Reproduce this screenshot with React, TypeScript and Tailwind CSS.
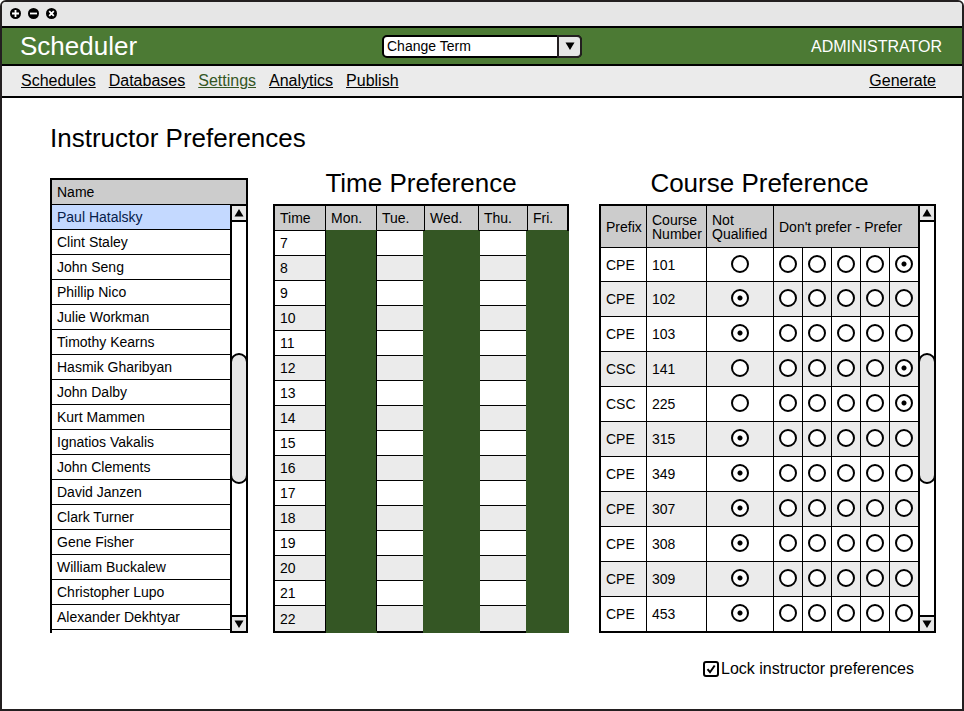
import { useState } from "react";

const instructors = [
  "Paul Hatalsky",
  "Clint Staley",
  "John Seng",
  "Phillip Nico",
  "Julie Workman",
  "Timothy Kearns",
  "Hasmik Gharibyan",
  "John Dalby",
  "Kurt Mammen",
  "Ignatios Vakalis",
  "John Clements",
  "David Janzen",
  "Clark Turner",
  "Gene Fisher",
  "William Buckalew",
  "Christopher Lupo",
  "Alexander Dekhtyar",
];

const hours = [7, 8, 9, 10, 11, 12, 13, 14, 15, 16, 17, 18, 19, 20, 21, 22];

// rating 0 means "not qualified"; 1 to 5 run from "don't prefer" to "prefer"
const courses = [
  { prefix: "CPE", number: 101, rating: 5 },
  { prefix: "CPE", number: 102, rating: 0 },
  { prefix: "CPE", number: 103, rating: 0 },
  { prefix: "CSC", number: 141, rating: 5 },
  { prefix: "CSC", number: 225, rating: 5 },
  { prefix: "CPE", number: 315, rating: 0 },
  { prefix: "CPE", number: 349, rating: 0 },
  { prefix: "CPE", number: 307, rating: 0 },
  { prefix: "CPE", number: 308, rating: 0 },
  { prefix: "CPE", number: 309, rating: 0 },
  { prefix: "CPE", number: 453, rating: 0 },
];

const navLinks = ["Schedules", "Databases", "Settings", "Analytics", "Publish"];

function WindowButton({ label, path }: { label: string; path: string }) {
  return (
    <button type="button" aria-label={label} className="block">
      <svg viewBox="0 0 12 12" className="block size-3">
        <circle cx="6.5" cy="5.5" r="5.5" fill="#000" />
        <path d={path} stroke="#fff" strokeWidth="1.8" fill="none" />
      </svg>
    </button>
  );
}

function Arrow({ up = false }: { up?: boolean }) {
  return (
    <svg viewBox="0 0 10 8" className="block h-2 w-2.5" aria-hidden="true">
      <path d={up ? "M5 0 9.5 7.5H0.5Z" : "M5 8 9.5 0.5H0.5Z"} fill="#000" />
    </svg>
  );
}

function Scrollbar() {
  return (
    <div className="flex w-[18px] shrink-0 flex-col border-2 border-black bg-white">
      <button
        type="button"
        aria-label="Scroll up"
        className="flex h-4 items-center justify-center border-b-2 border-black bg-[#e6e6e6]"
      >
        <Arrow up />
      </button>
      <div className="flex flex-1 flex-col justify-center">
        <div className="-mx-0.5 h-1/3 rounded-full border-2 border-black bg-[#e6e6e6]" />
      </div>
      <button
        type="button"
        aria-label="Scroll down"
        className="flex h-4 items-center justify-center border-t-2 border-black bg-[#e6e6e6]"
      >
        <Arrow />
      </button>
    </div>
  );
}

function InstructorList() {
  const [selected, setSelected] = useState("Paul Hatalsky");
  return (
    <section className="mt-[11px] flex flex-col border-t-2 border-black text-sm">
      <h2 className="h-6 border-x-2 border-black bg-[#cccccc] px-[5px] leading-6">Name</h2>
      <div className="flex flex-1">
        <ul className="flex-1 border-t border-l-2 border-black">
          {instructors.map((name) => (
            <li key={name} className="border-b border-black">
              <button
                type="button"
                onClick={() => setSelected(name)}
                className={
                  name === selected
                    ? "block h-6 w-full bg-[#c4d9ff] px-[5px] text-left leading-6 text-[#06204a]"
                    : "block h-6 w-full px-[5px] text-left leading-6"
                }
              >
                {name}
              </button>
            </li>
          ))}
        </ul>
        <Scrollbar />
      </div>
    </section>
  );
}

function TimePreference() {
  const head = "h-[25px] border-r border-b border-black pl-[5px] text-left font-normal";
  const headBusy = "h-[25px] border-r border-r-black border-b border-b-[#345624] pl-[5px] text-left font-normal";
  const open = "border-r border-b border-black group-last:border-b-0";
  return (
    <section>
      <h2 className="mb-[5px] text-center text-[26px] leading-8">Time Preference</h2>
      <table className="w-full table-fixed border-separate border-spacing-0 border-2 border-black text-sm">
        <colgroup>
          <col className="w-[51px]" />
          <col className="w-[51px]" />
          <col className="w-[48px]" />
          <col className="w-[54px]" />
          <col className="w-[49px]" />
          <col className="w-[39px]" />
        </colgroup>
        <thead className="bg-[#cccccc]">
          <tr>
            <th className={head}>Time</th>
            <th className={headBusy}>Mon.</th>
            <th className={head}>Tue.</th>
            <th className={headBusy}>Wed.</th>
            <th className={head}>Thu.</th>
            <th className="h-[25px] border-b border-[#345624] pl-[5px] text-left font-normal">Fri.</th>
          </tr>
        </thead>
        <tbody>
          {hours.map((hour) => (
            <tr key={hour} className="group even:bg-[#ebebeb]">
              <th
                scope="row"
                className="h-[25px] border-r border-b border-black pl-[5px] text-left font-normal group-last:border-b-0"
              >
                {hour}
              </th>
              <td className="relative border-r border-black bg-[#345624] shadow-[0_2px_#345624]" />
              <td className={open} />
              <td className="relative bg-[#345624] shadow-[-2px_0_#345624,1px_0_#345624,-2px_2px_#345624,1px_2px_#345624]" />
              <td className={open} />
              <td className="relative bg-[#345624] shadow-[-2px_0_#345624,2px_0_#345624,-2px_2px_#345624,2px_2px_#345624]" />
            </tr>
          ))}
        </tbody>
      </table>
    </section>
  );
}

function CoursePreference() {
  const [ratings, setRatings] = useState(courses.map((course) => course.rating));
  const rate = (row: number, value: number) =>
    setRatings(ratings.map((old, index) => (index === row ? value : old)));
  const head = "h-[42px] border-r border-b border-black pl-[5px] text-left leading-[14px] font-normal";
  const text = "h-[35px] border-r border-b border-black pl-[5px] group-first:h-[34px] group-last:h-[34px] group-last:border-b-0";
  return (
    <section className="flex flex-col pl-[5px]">
      <h2 className="mb-[5px] pr-4 text-center text-[26px] leading-8">Course Preference</h2>
      <div className="flex">
        <table className="flex-1 table-fixed border-separate border-spacing-0 border-y-2 border-l-2 border-black text-sm">
          <colgroup>
            <col className="w-[46px]" />
            <col className="w-[60px]" />
            <col className="w-[67px]" />
            <col className="w-[29px]" />
            <col className="w-[29px]" />
            <col className="w-[29px]" />
            <col className="w-[29px]" />
            <col className="w-[28px]" />
          </colgroup>
          <thead className="bg-[#cccccc]">
            <tr>
              <th className={head}>Prefix</th>
              <th className={head}>
                Course
                <br />
                Number
              </th>
              <th className={head}>
                Not
                <br />
                Qualified
              </th>
              <th
                colSpan={5}
                className="border-b border-black pl-[5px] text-left leading-[14px] font-normal"
              >
                Don't prefer - Prefer
              </th>
            </tr>
          </thead>
          <tbody>
            {courses.map((course, row) => (
              <tr key={course.number} className="group even:bg-[#ebebeb]">
                <td className={text}>{course.prefix}</td>
                <td className={text}>{course.number}</td>
                {[0, 1, 2, 3, 4, 5].map((value) => (
                  <td
                    key={value}
                    className="border-r border-b border-black pb-0.5 group-last:border-b-0 last:border-r-0"
                  >
                    <input
                      type="radio"
                      name={`course-${course.number}`}
                      aria-label={
                        value === 0
                          ? `${course.prefix} ${course.number} not qualified`
                          : `${course.prefix} ${course.number} preference ${value}`
                      }
                      checked={ratings[row] === value}
                      onChange={() => rate(row, value)}
                      className="mx-auto block size-[18px] appearance-none rounded-full border-2 border-black bg-white checked:bg-[radial-gradient(circle,#000_2px,#fff_3px)]"
                    />
                  </td>
                ))}
              </tr>
            ))}
          </tbody>
        </table>
        <Scrollbar />
      </div>
    </section>
  );
}

export default function App() {
  const [locked, setLocked] = useState(true);
  return (
    <div className="min-h-screen rounded-t-md border-2 border-[#231f20] bg-white font-['Liberation_Sans',Arial,sans-serif] text-black">
      <div className="flex h-[26px] items-center gap-1.5 rounded-t border-b-2 border-black bg-[#e6e6e6] pl-[7px]">
        <WindowButton label="Maximize" path="M6.5 2V9M3 5.5H10" />
        <WindowButton label="Minimize" path="M3 5.5H10" />
        <WindowButton label="Close" path="M4.2 3.2 8.8 7.8M8.8 3.2 4.2 7.8" />
      </div>

      <header className="grid h-[38px] grid-cols-[1fr_200px_1fr] items-center border-b-2 border-black bg-[#4c7a34] px-[18px] text-white">
        <h1 className="text-[26px] leading-8">Scheduler</h1>
        <div className="relative text-black">
          <select
            aria-label="Change Term"
            className="block h-[23px] w-full appearance-none rounded-[5px] border-2 border-black bg-white pl-[3px] text-sm leading-4"
          >
            <option>Change Term</option>
          </select>
          <span className="pointer-events-none absolute inset-y-0 right-0 flex w-[25px] items-center justify-center rounded-r-[5px] border-2 border-[#231f20] bg-[#e6e6e6]">
            <Arrow />
          </span>
        </div>
        <p className="pt-0.5 pr-0.5 text-right text-base leading-5">ADMINISTRATOR</p>
      </header>

      <nav className="flex h-8 items-center gap-[13px] border-b-2 border-black bg-[#ebebeb] pr-[26px] pl-[19px] text-base">
        {navLinks.map((link) => (
          <a
            key={link}
            href="#"
            className={link === "Settings" ? "text-[#345624] underline" : "underline"}
          >
            {link}
          </a>
        ))}
        <a href="#" className="ml-auto underline">
          Generate
        </a>
      </nav>

      <main className="pt-6 pr-[26px] pl-12">
        <h2 className="text-[26px] leading-8">Instructor Preferences</h2>
        <div className="mt-[13px] grid grid-cols-[198fr_296fr_342fr] gap-x-[25px]">
          <InstructorList />
          <TimePreference />
          <CoursePreference />
        </div>
        <label className="my-6 flex items-center justify-end gap-0.5 pr-[22px] text-base leading-6">
          <span className="relative block size-4">
            <input
              type="checkbox"
              checked={locked}
              onChange={(event) => setLocked(event.target.checked)}
              className="peer block size-4 appearance-none rounded-[3px] border-2 border-black bg-white"
            />
            <svg
              viewBox="0 0 16 16"
              className="pointer-events-none absolute inset-0 hidden size-4 peer-checked:block"
              aria-hidden="true"
            >
              <path d="M4.5 8.2 7 11.2 11.7 4.5" fill="none" stroke="#000" strokeWidth="2" />
            </svg>
          </span>
          Lock instructor preferences
        </label>
      </main>
    </div>
  );
}
